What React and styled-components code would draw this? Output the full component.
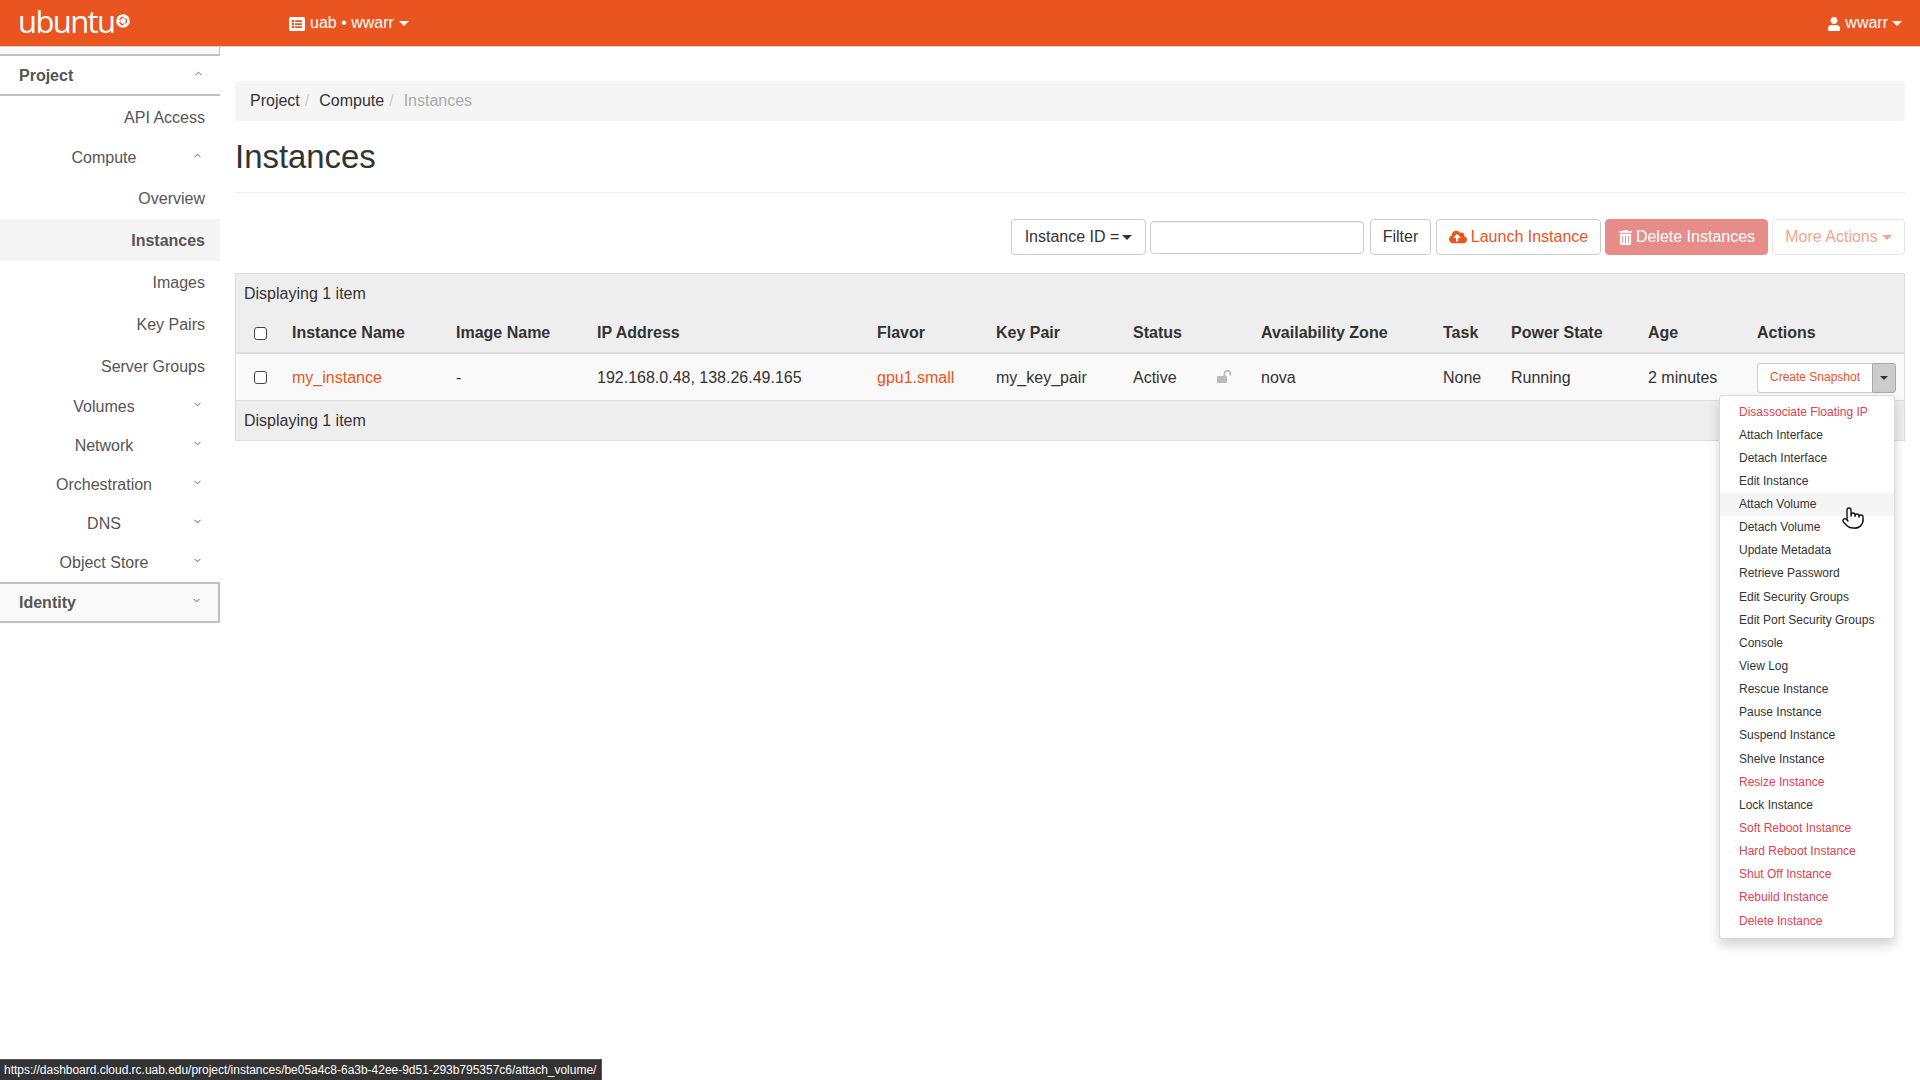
import React from "react";
import styled, { createGlobalStyle } from "styled-components";
import { FaListAlt, FaUser, FaCloudUploadAlt, FaTrashAlt } from "react-icons/fa";
import { Pointer, ChevronUp, ChevronDown } from "lucide-react";

const Global = createGlobalStyle`
  html, body { margin: 0; padding: 0; height: 100%; background: #fff; overflow: hidden; }
  body { font-family: "Liberation Sans", Arial, sans-serif; font-size: 16px; line-height: 1.42857; color: #333; }
  * { box-sizing: border-box; }
`;

const Page = styled.div`
  position: relative;
  width: 1920px;
  height: 1080px;
  overflow: hidden;
  display: flex;
  flex-direction: column;
`;

const Navbar = styled.header`
  height: 47px;
  flex: none;
  background: #e95420;
  border-bottom: 1px solid #d0d0d0;
  display: flex;
  align-items: center;
  color: #fff;
  padding-right: 18px;
`;
const Logo = styled.div`
  width: 289px;
  padding-left: 18px;
  display: flex;
  align-items: flex-start;
  flex: none;
`;
const LogoText = styled.span`
  font-family: "Open Sans", "Noto Sans", sans-serif;
  font-weight: 400;
  font-size: 31px;
  line-height: 40px;
  letter-spacing: -1.6px;
  margin-top: -4px;
`;
const LogoMark = styled.svg`
  width: 14px;
  height: 14px;
  margin: 9px 0 0 2px;
`;
const NavMenu = styled.div`
  display: flex;
  align-items: center;
  gap: ${p => (p.$right ? 4 : 5)}px;
  padding-top: 1px;
  font-size: 16px;
  margin-right: ${p => (p.$right ? 0 : "auto")};
  svg.ic { font-size: ${p => (p.$right ? "14px" : "16px")}; }
`;
const Caret = styled.span`
  display: inline-block;
  width: 0;
  height: 0;
  border-top: 5px solid ${p => p.$color || "currentColor"};
  border-left: 5px solid transparent;
  border-right: 5px solid transparent;
`;

const Body = styled.div`
  flex: 1;
  display: flex;
  min-height: 0;
`;
const Sidebar = styled.nav`
  width: 220px;
  flex: none;
  color: #555;
`;
const Stub = styled.div`
  height: 9px;
  background: #f9f9f9;
  border-bottom: 2px solid #c0c0c0;
  border-right: 1px solid #c0c0c0;
`;
const Panel = styled.div`
  height: ${p => (p.$closed ? 41 : 40)}px;
  display: flex;
  align-items: center;
  justify-content: space-between;
  padding: 2px 16px 0 19px;
  font-weight: 700;
  background: ${p => (p.$closed ? "#f9f9f9" : "#fff")};
  border-bottom: 2px solid #c0c0c0;
  border-top: ${p => (p.$closed ? "2px solid #c0c0c0" : "0")};
  border-right: ${p => (p.$closed ? "2px solid #c0c0c0" : "0")};
`;
const Angle = styled.span`
  display: flex;
  color: #555;
  position: relative;
  top: -3px;
`;
const Group = styled.div`
  height: 39px;
  display: flex;
  align-items: center;
  padding-top: 2px;
`;
const GroupLabel = styled.a`
  flex: none;
  width: 208px;
  text-align: center;
  margin-right: -16px;
`;
const Leaf = styled.a`
  display: block;
  height: 42px;
  line-height: 44px;
  padding-right: 15px;
  text-align: right;
  font-weight: ${p => (p.$active ? 700 : 400)};
  background: ${p => (p.$active ? "#f5f5f5" : "transparent")};
`;

const Main = styled.main`
  flex: 1;
  min-width: 0;
  padding: 34px 15px 0;
`;
const Breadcrumb = styled.ol`
  list-style: none;
  margin: 0;
  height: 40px;
  padding: 0 15px;
  background: #f5f5f5;
  border-radius: 4px;
  display: flex;
  align-items: center;
`;
const Crumb = styled.li`
  color: ${p => (p.$active ? "#aaa" : "#333")};
  &:not(:first-child)::before {
    content: "/";
    color: #ccc;
    padding: 0 10px 0 5px;
  }
`;
const PageHeader = styled.div`
  height: 72px;
  border-bottom: 1px solid #eee;
  display: flex;
  align-items: center;
  padding-top: 1px;
`;
const Title = styled.h1`
  margin: 0;
  font-size: 32.9px;
  font-weight: 400;
  color: #333;
  line-height: 1.1;
`;
const Toolbar = styled.div`
  margin-top: 26px;
  height: 36px;
  display: flex;
  justify-content: flex-end;
  align-items: center;
`;
const Button = styled.button`
  height: 36px;
  font-family: inherit;
  font-size: 16px;
  border: 1px solid ${p => (p.$danger ? "#e68d87" : p.$muted ? "#e6e6e6" : "#ccc")};
  border-radius: 4px;
  background: ${p => (p.$danger ? "#e68d8a" : "#fff")};
  color: ${p => (p.$danger ? "#fff" : p.$muted ? "#f5a58a" : p.$orange ? "#e95420" : "#333")};
  width: ${p => p.$w}px;
  margin-left: ${p => p.$ml || 0}px;
  padding: 0;
  display: flex;
  align-items: center;
  justify-content: center;
  gap: ${p => p.$gap || 4}px;
  flex: none;
`;
const FilterInput = styled.input`
  width: 214px;
  height: 33px;
  margin-left: 4px;
  border: 1px solid #ccc;
  border-radius: 4px;
  box-shadow: inset 0 1px 1px rgba(0, 0, 0, 0.075);
`;

const Table = styled.table`
  margin-top: 18px;
  width: 1670px;
  table-layout: fixed;
  border-collapse: separate;
  border-spacing: 0;
  border: 1px solid #ddd;
`;
const Col = styled.col`
  width: ${p => p.$w}px;
`;
const BarCell = styled.td`
  background: #eee;
  padding: ${p => (p.$line ? 1 : 2)}px 8px 0;
  height: ${p => p.$h}px;
  border-top: ${p => (p.$line ? "1px solid #ddd" : "0")};
`;
const Th = styled.th`
  background: #eee;
  height: 42px;
  padding: 2px 8px 0;
  font-weight: 700;
  text-align: left;
  color: #333;
  border-bottom: 2px solid #ddd;
  white-space: nowrap;
`;
const Td = styled.td`
  background: #f9f9f9;
  height: 46px;
  padding: 2px 8px 0;
  white-space: nowrap;
  color: #333;
`;
const CheckCell = styled.div`
  display: flex;
  padding-left: 10px;
  margin-top: ${p => p.$top}px;
`;
const Check = styled.input.attrs({ type: "checkbox" })`
  appearance: none;
  width: 13px;
  height: 13px;
  margin: 0;
  border: 1.5px solid #444;
  border-radius: 3px;
  background: #fff;
`;
const Link = styled.a`
  color: #e95420;
`;
const LockIcon = styled.svg`
  display: block;
  width: 15px;
  height: 13px;
  margin: -3px 0 0 -1px;
`;
const Split = styled.div`
  position: relative;
  width: 139px;
  height: 30px;
  margin-top: -1px;
  display: flex;
`;
const SplitMain = styled.div`
  width: 115px;
  border: 1px solid #ccc;
  border-right: 0;
  border-radius: 3px 0 0 3px;
  background: #fff;
  color: #e95420;
  font-size: 12px;
  display: flex;
  align-items: center;
  justify-content: center;
`;
const SplitToggle = styled.div`
  width: 24px;
  background: #ccc;
  border: 1px solid #aaa;
  border-radius: 0 3px 3px 0;
  display: flex;
  align-items: center;
  justify-content: center;
`;
const SmallCaret = styled(Caret)`
  border-top-width: 4px;
  border-left-width: 4px;
  border-right-width: 4px;
`;
const Menu = styled.ul`
  position: absolute;
  top: 32px;
  right: 1px;
  width: 176px;
  z-index: 5;
  list-style: none;
  margin: 0;
  padding: 5px 0;
  background: #fff;
  border: 1px solid rgba(0, 0, 0, 0.15);
  border-radius: 4px;
  box-shadow: 0 6px 12px rgba(0, 0, 0, 0.175);
`;
const MenuItem = styled.li`
  font-size: 12px;
  line-height: 17.14px;
  padding: 3px 19px;
  white-space: nowrap;
  color: ${p => (p.$danger ? "#e04050" : "#333")};
  background: ${p => (p.$hover ? "#f5f5f5" : "transparent")};
`;
const Cursor = styled.div`
  position: absolute;
  left: 1841px;
  top: 506px;
  z-index: 10;
  display: flex;
  svg { fill: #fff; stroke: #111; }
`;
const StatusBar = styled.div`
  position: absolute;
  left: 0;
  bottom: 0;
  width: 602px;
  height: 21px;
  background: #333;
  border-top: 1px solid #555;
  border-right: 1px solid #555;
  color: #fff;
  font-size: 12px;
  line-height: 21px;
  letter-spacing: -0.02px;
  padding-left: 4px;
  white-space: nowrap;
`;

const items = [
  ["Disassociate Floating IP", 1], ["Attach Interface"], ["Detach Interface"], ["Edit Instance"],
  ["Attach Volume", 0, 1], ["Detach Volume"], ["Update Metadata"], ["Retrieve Password"],
  ["Edit Security Groups"], ["Edit Port Security Groups"], ["Console"], ["View Log"],
  ["Rescue Instance"], ["Pause Instance"], ["Suspend Instance"], ["Shelve Instance"],
  ["Resize Instance", 1], ["Lock Instance"], ["Soft Reboot Instance", 1], ["Hard Reboot Instance", 1],
  ["Shut Off Instance", 1], ["Rebuild Instance", 1], ["Delete Instance", 1],
];

const cols = [
  [48, <Check />], [164, "Instance Name"], [141, "Image Name"], [280, "IP Address"], [119, "Flavor"],
  [137, "Key Pair"], [85, "Status"], [43, ""], [182, "Availability Zone"], [68, "Task"],
  [137, "Power State"], [109, "Age"], [155, "Actions"],
];

const GroupRow = ({ label, open }) => (
  <Group>
    <GroupLabel>{label}</GroupLabel>
    <Angle>{open ? <ChevronUp size={11} strokeWidth={2} /> : <ChevronDown size={11} strokeWidth={2} />}</Angle>
  </Group>
);

export default function App() {
  return (
    <Page>
      <Global />
      <Navbar>
        <Logo>
          <LogoText>ubuntu</LogoText>
          <LogoMark viewBox="0 0 14 14">
            <circle cx="7" cy="7" r="6.8" fill="#fff" />
            <circle cx="7" cy="7" r="3.4" fill="none" stroke="#e95420" strokeWidth="1.5" />
            <circle cx="3" cy="7" r="1.2" fill="#fff" />
            <circle cx="9" cy="3.6" r="1.2" fill="#fff" />
            <circle cx="9" cy="10.4" r="1.2" fill="#fff" />
          </LogoMark>
        </Logo>
        <NavMenu>
          <FaListAlt className="ic" />
          <span>uab • wwarr</span>
          <Caret />
        </NavMenu>
        <NavMenu $right>
          <FaUser className="ic" />
          <span>wwarr</span>
          <Caret />
        </NavMenu>
      </Navbar>
      <Body>
        <Sidebar>
          <Stub />
          <Panel>Project<Angle><ChevronUp size={11} strokeWidth={2} /></Angle></Panel>
          <Leaf>API Access</Leaf>
          <GroupRow label="Compute" open />
          <Leaf>Overview</Leaf>
          <Leaf $active>Instances</Leaf>
          <Leaf>Images</Leaf>
          <Leaf>Key Pairs</Leaf>
          <Leaf>Server Groups</Leaf>
          <GroupRow label="Volumes" />
          <GroupRow label="Network" />
          <GroupRow label="Orchestration" />
          <GroupRow label="DNS" />
          <GroupRow label="Object Store" />
          <Panel $closed>Identity<Angle><ChevronDown size={11} strokeWidth={2} /></Angle></Panel>
        </Sidebar>
        <Main>
          <Breadcrumb>
            <Crumb>Project</Crumb>
            <Crumb>Compute</Crumb>
            <Crumb $active>Instances</Crumb>
          </Breadcrumb>
          <PageHeader><Title>Instances</Title></PageHeader>
          <Toolbar>
            <Button $w={135} $gap={3}>Instance ID =<Caret /></Button>
            <FilterInput />
            <Button $w={61} $ml={6}>Filter</Button>
            <Button $w={165} $ml={5} $orange><FaCloudUploadAlt size={18} />Launch Instance</Button>
            <Button $w={163} $ml={4} $danger $gap={3}><FaTrashAlt size={15} />Delete Instances</Button>
            <Button $w={133} $ml={4} $muted>More Actions<Caret /></Button>
          </Toolbar>
          <Table>
            <colgroup>
              {cols.map(([w], i) => <Col key={i} $w={w} />)}
            </colgroup>
            <thead>
              <tr><BarCell colSpan={13} $h={38}>Displaying 1 item</BarCell></tr>
              <tr>
                {cols.map(([, label], i) => (
                  <Th key={i}>{i === 0 ? <CheckCell $top={1}>{label}</CheckCell> : label}</Th>
                ))}
              </tr>
            </thead>
            <tbody>
              <tr>
                <Td><CheckCell $top={-2}><Check /></CheckCell></Td>
                <Td><Link>my_instance</Link></Td>
                <Td>-</Td>
                <Td>192.168.0.48, 138.26.49.165</Td>
                <Td><Link>gpu1.small</Link></Td>
                <Td>my_key_pair</Td>
                <Td>Active</Td>
                <Td>
                  <LockIcon viewBox="0 0 15 13">
                    <rect x="0" y="6" width="10" height="7" rx="1" fill="#bbb" />
                    <path d="M7.5 6.5V3.6a2.9 2.9 0 0 1 5.8 0V5.5" fill="none" stroke="#bbb" strokeWidth="1.8" />
                  </LockIcon>
                </Td>
                <Td>nova</Td>
                <Td>None</Td>
                <Td>Running</Td>
                <Td>2 minutes</Td>
                <Td>
                  <Split>
                    <SplitMain>Create Snapshot</SplitMain>
                    <SplitToggle><SmallCaret $color="#333" /></SplitToggle>
                    <Menu>
                      {items.map(([t, d, h]) => (
                        <MenuItem key={t} $danger={d} $hover={h}>{t}</MenuItem>
                      ))}
                    </Menu>
                  </Split>
                </Td>
              </tr>
            </tbody>
            <tfoot>
              <tr><BarCell colSpan={13} $h={40} $line>Displaying 1 item</BarCell></tr>
            </tfoot>
          </Table>
        </Main>
      </Body>
      <Cursor><Pointer size={24} strokeWidth={1.4} /></Cursor>
      <StatusBar>https://dashboard.cloud.rc.uab.edu/project/instances/be05a4c8-6a3b-42ee-9d51-293b795357c6/attach_volume/</StatusBar>
    </Page>
  );
}
